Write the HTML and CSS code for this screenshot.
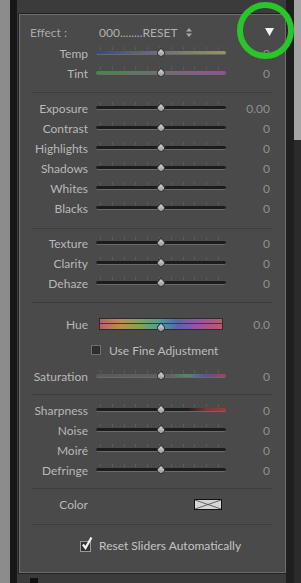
FILE: index.html
```html
<!DOCTYPE html>
<html lang="en">

<head>
    <meta charset="UTF-8">
    <meta name="viewport" content="width=device-width, initial-scale=1.0">
    <title>Effects Panel</title>
    <link rel="stylesheet" href="styles.css">
</head>

<body>
    <div class="edge"></div>
    <div class="rail"></div>

    <div class="main">
        <div class="panel">
            <div class="ring"></div>

            <div class="row effect">
                <span class="label">Effect :</span>
                <span class="preset">000........RESET
                    <svg width="6" height="9" viewBox="0 0 6 9"><path d="M3 0L6 3.5H0Z M3 9L6 5.5H0Z" fill="#a8a8a8"/></svg>
                </span>
                <span class="value"><svg class="collapse" width="9" height="8" viewBox="0 0 9 8"><path d="M0 0H9L4.5 8Z" fill="#f2f2f2"/></svg></span>
            </div>
            <div class="row">
                <span class="label">Temp</span>
                <div class="slider"><div class="ticks"></div><div class="track temp"></div><div class="thumb"></div></div>
                <span class="value">0</span>
            </div>
            <div class="row">
                <span class="label">Tint</span>
                <div class="slider"><div class="ticks"></div><div class="track tint"></div><div class="thumb"></div></div>
                <span class="value">0</span>
            </div>

            <div class="sep"></div>

            <div class="row">
                <span class="label">Exposure</span>
                <div class="slider"><div class="ticks"></div><div class="track"></div><div class="thumb"></div></div>
                <span class="value">0.00</span>
            </div>
            <div class="row">
                <span class="label">Contrast</span>
                <div class="slider"><div class="ticks"></div><div class="track"></div><div class="thumb"></div></div>
                <span class="value">0</span>
            </div>
            <div class="row">
                <span class="label">Highlights</span>
                <div class="slider"><div class="ticks"></div><div class="track"></div><div class="thumb"></div></div>
                <span class="value">0</span>
            </div>
            <div class="row">
                <span class="label">Shadows</span>
                <div class="slider"><div class="ticks"></div><div class="track"></div><div class="thumb"></div></div>
                <span class="value">0</span>
            </div>
            <div class="row">
                <span class="label">Whites</span>
                <div class="slider"><div class="ticks"></div><div class="track"></div><div class="thumb"></div></div>
                <span class="value">0</span>
            </div>
            <div class="row">
                <span class="label">Blacks</span>
                <div class="slider"><div class="ticks"></div><div class="track"></div><div class="thumb"></div></div>
                <span class="value">0</span>
            </div>

            <div class="sep sep-wide"></div>

            <div class="row">
                <span class="label">Texture</span>
                <div class="slider"><div class="ticks"></div><div class="track"></div><div class="thumb"></div></div>
                <span class="value">0</span>
            </div>
            <div class="row">
                <span class="label">Clarity</span>
                <div class="slider"><div class="ticks"></div><div class="track"></div><div class="thumb"></div></div>
                <span class="value">0</span>
            </div>
            <div class="row">
                <span class="label">Dehaze</span>
                <div class="slider"><div class="ticks"></div><div class="track"></div><div class="thumb"></div></div>
                <span class="value">0</span>
            </div>

            <div class="sep sep-hue"></div>

            <div class="row tall">
                <span class="label">Hue</span>
                <div class="slider"><div class="hue"></div><div class="thumb hue-thumb"></div></div>
                <span class="value">0.0</span>
            </div>
            <div class="row tall fine">
                <span class="box"></span>
                <span class="fine-text">Use Fine Adjustment</span>
            </div>
            <div class="row tall">
                <span class="label">Saturation</span>
                <div class="slider"><div class="ticks"></div><div class="track sat"></div><div class="thumb"></div></div>
                <span class="value">0</span>
            </div>

            <div class="sep sep-tight"></div>

            <div class="row">
                <span class="label">Sharpness</span>
                <div class="slider"><div class="ticks"></div><div class="track sharp"></div><div class="thumb"></div></div>
                <span class="value">0</span>
            </div>
            <div class="row">
                <span class="label">Noise</span>
                <div class="slider"><div class="ticks"></div><div class="track"></div><div class="thumb"></div></div>
                <span class="value">0</span>
            </div>
            <div class="row">
                <span class="label">Moiré</span>
                <div class="slider"><div class="ticks"></div><div class="track"></div><div class="thumb"></div></div>
                <span class="value">0</span>
            </div>
            <div class="row">
                <span class="label">Defringe</span>
                <div class="slider"><div class="ticks"></div><div class="track"></div><div class="thumb"></div></div>
                <span class="value">0</span>
            </div>

            <div class="sep sep-color"></div>

            <div class="row">
                <span class="label">Color</span>
                <div class="slider">
                    <svg class="swatch" width="28" height="11" viewBox="0 0 28 11">
                        <rect x="0.5" y="0.5" width="27" height="10" fill="#d6d6d6" stroke="#111"/>
                        <path d="M1 1L27 10M27 1L1 10" stroke="#444" stroke-width="0.8"/>
                    </svg>
                </div>
            </div>

            <div class="sep sep-reset"></div>

            <div class="row reset">
                <span class="box checked">
                    <svg width="12" height="13" viewBox="0 0 12 13"><path d="M2 7.5L4.5 11L10.5 0.5" stroke="#f4f4f4" stroke-width="2.2" fill="none"/></svg>
                </span>
                <span class="reset-text">Reset Sliders Automatically</span>
            </div>
        </div>
        <div class="below"><span class="peek"></span></div>
    </div>

    <div class="gutter"></div>
    <div class="scroll"><div class="scroll-thumb"></div></div>
</body>

</html>
```
FILE: styles.css
```css
body {
    margin: 0;
    height: 583px;
    overflow: hidden;
    display: flex;
    background: #3a3a3a;
    font-family: Lato, "Open Sans", sans-serif;
    font-size: 12px;
}

.edge {
    width: 10px;
    background: #8c8c8c;
}

.rail {
    width: 7px;
    background: #171717;
}

.main {
    width: 269px;
    padding: 14px 0 0 2px;
    box-sizing: border-box;
    background: #3b3b3b;
}

.panel {
    position: relative;
    width: 267px;
    height: 559px;
    box-sizing: border-box;
    border: 1px solid #6c6c6c;
    box-shadow: 0 0 0 1px #222;
    background: #4a4a4a;
    padding-top: 7px;
}

.ring {
    position: absolute;
    left: 217px;
    top: -13px;
    width: 57px;
    height: 57px;
    box-sizing: border-box;
    border: 6px solid #29c629;
    border-radius: 50%;
}

.row {
    display: grid;
    grid-template-columns: 68px 130px 36px;
    column-gap: 8px;
    height: 20px;
    align-items: center;
}

.row.tall {
    height: 26px;
}

.effect {
    height: 21px;
}

.label {
    text-align: right;
    color: #b8b8b8;
    white-space: nowrap;
}

.effect .label {
    text-align: left;
    padding-left: 10px;
    color: #a9a9a9;
}

.preset {
    padding-left: 3px;
    color: #b0b0b0;
    display: flex;
    align-items: center;
    gap: 8px;
    white-space: nowrap;
}

.value {
    text-align: right;
    color: #8f8f8f;
}

.collapse {
    display: block;
    margin: 0 -4px 2px auto;
}

.slider {
    position: relative;
    height: 20px;
    display: flex;
    flex-direction: column;
    justify-content: center;
    padding-bottom: 4px;
    box-sizing: border-box;
}

.ticks {
    height: 3px;
    margin: 0 4px 1px 4px;
    background: repeating-linear-gradient(90deg, #5c5c5c 0 1px, transparent 1px 11.8px);
}

.track {
    height: 3px;
    border-radius: 2px;
    background: #1c1c1c;
    border-bottom: 1px solid #6a6a6a;
}

.track.temp {
    background: linear-gradient(90deg, #3c4394, #6f6f80 50%, #97974c);
}

.track.tint {
    background: linear-gradient(90deg, #3f8a44, #707070 50%, #9a4d9c);
}

.track.sat {
    background: linear-gradient(90deg, #5a5a5a, #606060 55%, #4d8c66 70%, #5a4fa0 85%, #b04050);
}

.track.sharp {
    background: linear-gradient(90deg, #1c1c1c, #1c1c1c 70%, #7a3838 85%, #a03a3a);
}

.thumb {
    position: absolute;
    left: 61px;
    top: 5.5px;
    width: 8px;
    height: 8px;
    box-sizing: border-box;
    border: 1px solid #3a3a3a;
    border-radius: 0 50% 50% 50%;
    background: linear-gradient(135deg, #d6d6d6, #8e8e8e);
    transform: rotate(45deg);
}

.hue {
    height: 12px;
    margin: 4px 3px 0 3px;
    box-sizing: border-box;
    border: 1px solid #2c2c2c;
    background:
        linear-gradient(transparent 4px, #3a3a3a 4px 5px, transparent 5px),
        linear-gradient(90deg, #b9606a, #b8904f 17%, #7fa45a 33%, #4f9e90 48%, #5a64aa 64%, #9a54a2 80%, #bb5a68);
}

.hue-thumb {
    top: 10px;
}

.fine {
    display: flex;
    align-items: center;
    padding-left: 71px;
    gap: 8px;
}

.box {
    width: 10px;
    height: 10px;
    box-sizing: border-box;
    border: 1px solid #6e6e6e;
    background: #2e2e2e;
}

.fine-text {
    color: #bdbdbd;
    font-size: 12px;
}

.reset {
    display: flex;
    align-items: center;
    padding-left: 60px;
    gap: 8px;
}

.box.checked {
    position: relative;
    width: 11px;
    height: 11px;
    margin-top: 3px;
    border-color: #9a9a9a;
    background: #333;
}

.box.checked svg {
    position: absolute;
    left: 0;
    top: -5px;
}

.reset-text {
    color: #c4c4c4;
    font-size: 12px;
}

.swatch {
    display: block;
    margin: 0 0 0 98px;
}

.row .slider:has(.swatch) {
    padding-bottom: 0;
}

.sep {
    height: 1px;
    background: #3d3d3d;
    margin: 9px 13px 5px 12px;
}

.sep-wide {
    margin: 10px 13px 4px 12px;
}

.sep-hue {
    margin: 9px 13px 8px 12px;
}

.sep-tight {
    margin: 5px 13px 5px 12px;
}

.sep-color {
    margin: 8px 13px 5px 12px;
}

.sep-reset {
    margin: 10px 13px 10px 12px;
}

.below {
    height: 10px;
    padding: 5px 0 0 11px;
    box-sizing: border-box;
}

.peek {
    display: block;
    width: 8px;
    height: 5px;
    background: #111;
}

.gutter {
    width: 8px;
    background: #1f1f1f;
}

.scroll {
    width: 7px;
    background: #2b2b2b;
}

.scroll-thumb {
    height: 140px;
    background: #a5a5a5;
}
```
